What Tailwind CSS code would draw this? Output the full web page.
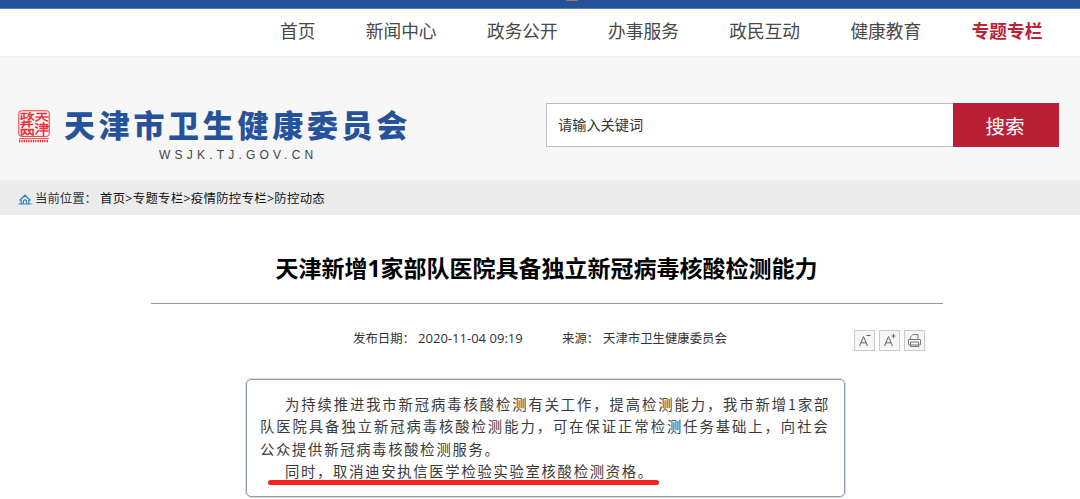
<!DOCTYPE html>
<html lang="zh-CN">
<head>
<meta charset="utf-8">
<title>天津市卫生健康委员会</title>
<script src="https://cdn.jsdelivr.net/npm/@tailwindcss/browser@4"></script>
</head>
<body class="w-[1080px] h-[499px] overflow-hidden bg-[#fefefe] font-['Open_Sans','Noto_Sans_CJK_SC',sans-serif] text-[#333]">

<!-- top bar -->
<div class="h-[9px] bg-[#25529a] border-b border-[#64809f] flex justify-center overflow-hidden">
  <div class="w-3 h-px ml-16 rounded-b-full bg-[#a4705f]"></div>
</div>

<nav class="h-[47px] flex items-start pl-[280px] pt-[7px] gap-[50.4px] text-[17.7px] leading-[28px] whitespace-nowrap font-['Noto_Sans_CJK_SC',sans-serif] text-[#484848]">
  <a>首页</a>
  <a>新闻中心</a>
  <a>政务公开</a>
  <a>办事服务</a>
  <a>政民互动</a>
  <a>健康教育</a>
  <a class="font-bold text-[#bd2138]">专题专栏</a>
</nav>

<header class="h-[124px] bg-[#f7f7f7] border-t border-[#f1f1f1] flex items-start pl-[18px]">
  <!-- seal -->
  <svg class="mt-[53px] w-8 h-[34px] shrink-0" viewBox="0 0 32 34" fill="none" stroke="#ee3338">
    <rect x="0.8" y="0.8" width="30.4" height="25.6" rx="2.5" stroke-width="1"/>
    <g stroke-width="1.6" stroke-linecap="round">
      <path d="M3 3.5h6M6 3.5v5M3.5 5.5v4M3 9l6-1.5M12 2.5l-2 3.5M11 4.5h4.5M14 5c-.5 2-2 4-4 5M11 6l4.5 4"/>
      <path d="M4 12.5l9-1M6 11v4l-2 2.5M11 11v6M3 14.5h11.5"/>
      <path d="M3 19.5h12.5M3.5 20v5.5M15 20v5.5M7 20c0 2-1 3.5-2 4.5M6 21l3 3.5M12 20c0 2-1 3.5-2 4.5M10.5 21l3 3.5"/>
      <path d="M19 3.5h9.5M18 7h12M24 3.5c0 4-2.5 6-6 7.5M24 7c1 2 3 3.5 5.5 4"/>
      <path d="M18 13.5l2 1M17.5 17l2 1M18 24l2.5-3.5M22 14.5h7v4h-7M21.5 16.5h9M22 21h8M25.5 12.5v13"/>
    </g>
    <path d="M1 28.5h30" stroke-width="0.8"/>
    <path d="M1 31h30" stroke-width="2.5" stroke-dasharray="1.4 0.9"/>
  </svg>
  <div class="ml-[14px] mt-[47px] w-[350px] shrink-0">
    <div class="text-[31px] leading-10 font-black tracking-[3.7px] whitespace-nowrap text-[#25529a] font-['Noto_Sans_CJK_SC',sans-serif]">天津市卫生健康委员会</div>
    <div class="pl-[95px] text-[12px] leading-[14px] mt-[4px] tracking-[4.2px] whitespace-nowrap text-[#444] font-['Liberation_Sans',sans-serif]">WSJK.TJ.GOV.CN</div>
  </div>
  <div class="mt-[46px] ml-[132px] flex h-[44px] shrink-0">
    <div class="w-[407px] bg-white border border-r-0 border-[#bdbdbd] flex items-center pl-[11px] text-[14.2px] font-['Noto_Sans_CJK_SC',sans-serif]">请输入关键词</div>
    <button class="w-[106px] pr-[2px] pt-px bg-[#b92033] text-white text-[19.5px] font-['Noto_Sans_CJK_SC',sans-serif]">搜索</button>
  </div>
</header>

<div class="h-[35px] bg-[#ececed] flex items-center pl-[18px] pt-[3px] text-[12.4px] whitespace-nowrap">
  <svg class="w-[14px] h-[11px]" viewBox="0 0 14 11" fill="none" stroke="#2b7fc4" stroke-width="1.2">
    <path d="M1.5 6.5L7 1.2l5.5 5.3M3.2 6v3.8M10.8 6v3.8M0.5 10h13"/>
    <path d="M5.3 9.8V7.5a1.7 1.7 0 013.4 0v2.3"/>
  </svg>
  <span class="ml-[3px] w-[65px] text-[#333]">当前位置：</span>
  <span class="tracking-[0.29px] text-[#111]">首页&gt;专题专栏&gt;疫情防控专栏&gt;防控动态</span>
</div>

<main class="flex flex-col items-center">
  <div class="w-[792px] h-[88.5px] border-b border-[#999] ml-[13px] pt-[36px] text-center">
    <h1 class="text-[23px] leading-[34px] font-bold whitespace-nowrap text-black">天津新增1家部队医院具备独立新冠病毒核酸检测能力</h1>
  </div>

  <div class="w-full h-[75px] flex items-center pl-[353px] pb-[3px] text-[12.4px] whitespace-nowrap">
    <span class="w-[65px]">发布日期：</span>
    <span class="w-[144px] pb-[2px] text-[13.05px]">2020-11-04 09:19</span>
    <span class="w-[41px]">来源：</span>
    <span class="w-[252px]">天津市卫生健康委员会</span>
    <div class="flex gap-1 pt-px -ml-px">
      <svg class="w-[21px] h-[21px]" viewBox="0 0 21 21" fill="none" stroke="#666">
        <rect x="0.5" y="0.5" width="20" height="20" fill="#f5f5f5" stroke="#ccc"/>
        <path d="M5.5 16l4-9.5 4 9.5M7 12.8h5M12.5 5.5h4"/>
      </svg>
      <svg class="w-[21px] h-[21px]" viewBox="0 0 21 21" fill="none" stroke="#666">
        <rect x="0.5" y="0.5" width="20" height="20" fill="#f5f5f5" stroke="#ccc"/>
        <path d="M5.5 16l4-9.5 4 9.5M7 12.8h5M12.5 6h4M14.5 4v4"/>
      </svg>
      <svg class="w-[21px] h-[21px]" viewBox="0 0 21 21" fill="none" stroke="#777">
        <rect x="0.5" y="0.5" width="20" height="20" fill="#f5f5f5" stroke="#ccc"/>
        <path d="M6.5 9.5V7L9 4.5h5v5M6.5 9.5H5q-.5 0-.5.5v4.5q0 .5.5.5h11q.5 0 .5-.5V10q0-.5-.5-.5h-1.5zM6.5 9.5h8M6.5 12h8v4.5h-8z"/>
      </svg>
    </div>
  </div>

  <article class="relative w-[599px] h-[118px] ml-[11px] border-[1.5px] outline-[0.5px] outline-[#a3adbb]/40 border-[#8f9bad] rounded-[5px] pt-[13px] pl-[13px] text-[14.3px] leading-[22.5px] tracking-[1.74px] whitespace-nowrap text-[#3a3a3a] font-['Noto_Sans_CJK_SC',sans-serif]">
    <p class="pl-[25px] tracking-[1.93px]">为持续推进我市新冠病毒核酸检测有关工作，提高检测能力，我市新增1家部</p>
    <p class="tracking-[1.98px]">队医院具备独立新冠病毒核酸检测能力，可在保证正常检测任务基础上，向社会</p>
    <p>公众提供新冠病毒核酸检测服务。</p>
    <p class="pl-[25px]">同时，取消迪安执信医学检验实验室核酸检测资格。</p>
    <!-- underline marker -->
    <div class="absolute left-[21px] top-[100px] w-[391px] h-[5px] rounded-full bg-[#f3231f]"></div>
  </article>
</main>

</body>
</html>
